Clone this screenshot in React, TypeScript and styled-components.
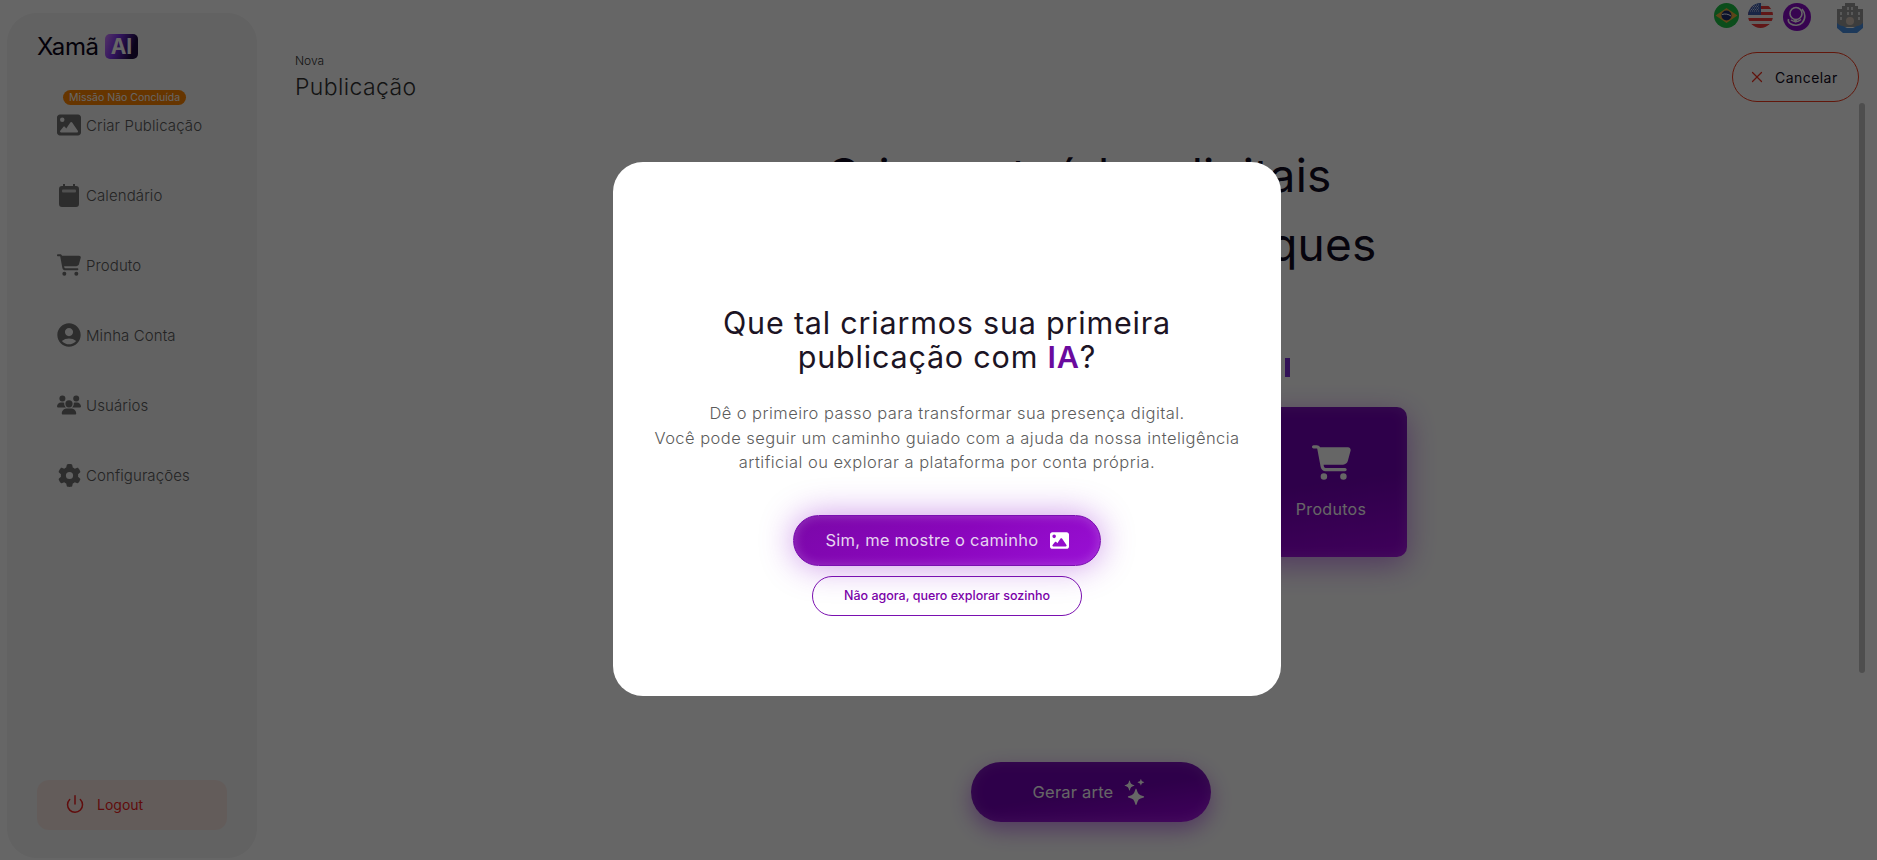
import React from 'react';
import styled, { createGlobalStyle } from 'styled-components';
import { FaCartShopping, FaGear, FaImage, FaUsers } from 'react-icons/fa6';
import { MdAccountCircle } from 'react-icons/md';
import { BsStars } from 'react-icons/bs';
import { Power, X } from 'lucide-react';

const FONT = `Inter, "Open Sans", "Liberation Sans", sans-serif`;

const GlobalStyle = createGlobalStyle`
  html, body {
    margin: 0;
    height: 860px;
    overflow: hidden;
    background: #fff;
    font-family: ${FONT};
  }
  * { box-sizing: border-box; }
`;

const CalendarIcon = () => (
  <svg width="24" height="24" viewBox="0 0 24 24">
    <path
      d="M6 1h2v2h8V1h2v2h1a3 3 0 0 1 3 3v15a3 3 0 0 1-3 3H5a3 3 0 0 1-3-3V6a3 3 0 0 1 3-3h1z"
      fill="currentColor"
    />
    <rect x="5" y="6.500" width="14" height="3" rx="1" fill="#c8c8c8" />
  </svg>
);

const NAV_ITEMS = [
  { label: 'Criar Publicação', icon: <FaImage size={24} />, mission: true },
  { label: 'Calendário', icon: <CalendarIcon /> },
  { label: 'Produto', icon: <FaCartShopping size={24} /> },
  { label: 'Minha Conta', icon: <MdAccountCircle size={28} /> },
  { label: 'Usuários', icon: <FaUsers size={24} /> },
  { label: 'Configurações', icon: <FaGear size={23} /> },
];

const BrazilFlag = () => (
  <svg width="25" height="25" viewBox="0 0 25 25">
    <circle cx="12.500" cy="12.500" r="12.500" fill="#1cc044" />
    <path d="M1.500 12.500 12.500 5l11 7.500-11 7.500z" fill="#e8ac3c" />
    <circle cx="12.500" cy="12.500" r="5" fill="#1c2f6b" />
    <path d="M8 11.500c3-1 6.500-.5 9 1.500" stroke="#fff" strokeWidth="1" fill="none" />
  </svg>
);

const UsaFlag = () => (
  <svg width="25" height="25" viewBox="0 0 25 25">
    <defs>
      <clipPath id="usa-clip">
        <circle cx="12.500" cy="12.500" r="12.500" />
      </clipPath>
    </defs>
    <g clipPath="url(#usa-clip)">
      <rect width="25" height="25" fill="#f4f4f4" />
      <rect y="3" width="25" height="3" fill="#f03a3a" />
      <rect y="9" width="25" height="3" fill="#f03a3a" />
      <rect y="15" width="25" height="3" fill="#f03a3a" />
      <rect y="21" width="25" height="4" fill="#f03a3a" />
      <rect width="13" height="12" fill="#3f5fae" />
      <path d="M2 2h9M2 5h9M2 8h9M3 3.500h8M3 6.500h8" stroke="#fff" strokeWidth=".7" strokeDasharray="1 1" />
    </g>
  </svg>
);

const HeadsetAvatar = () => (
  <svg width="28" height="28" viewBox="0 0 28 28">
    <circle cx="14" cy="14" r="14" fill="#8a0cc8" />
    <circle cx="13" cy="10.500" r="6" fill="none" stroke="#fff" strokeWidth="1.600" />
    <path d="M19 6c3.500 4 4 10 0 14-2.500 2.500-8 3-11 1-2.500-1.500-3-3.500-2.500-5" fill="none" stroke="#fff" strokeWidth="1.600" />
    <path d="M8 17c3 2 7 2 10-.5" fill="none" stroke="#fff" strokeWidth="1.500" />
    <circle cx="12.500" cy="17.800" r="1.600" fill="#fff" />
  </svg>
);

const CompanyIcon = () => (
  <svg width="26" height="30" viewBox="0 0 26 30">
    <path d="M0 6h5V3h3V0h10v3h3v3h5v18H0z" fill="#9a9a9a" />
    <path d="M3 9h2v3H3zM3 14h2v3H3zM21 9h2v3h-2zM21 14h2v3h-2zM10 4h2v3h-2zM14 4h2v3h-2zM10 9h2v3h-2zM14 9h2v3h-2z" fill="#dcdcdc" />
    <circle cx="13" cy="18" r="4" fill="#d8c6b8" />
    <path d="M0 20c2 2 4 3 6 3l4 2h6l4-2c2 0 4-1 6-3v5l-6 5H6l-6-5z" fill="#4a8fe0" />
  </svg>
);

const App: React.FC = () => {
  return (
    <Page>
      <GlobalStyle />
      <Sidebar>
        <Logo>
          Xamã<LogoBadge>AI</LogoBadge>
        </Logo>
        <Nav>
          {NAV_ITEMS.map((item) => (
            <NavItem key={item.label}>
              {item.mission && <MissionBadge>Missão Não Concluída</MissionBadge>}
              <NavIcon>{item.icon}</NavIcon>
              <NavLabel>{item.label}</NavLabel>
            </NavItem>
          ))}
        </Nav>
        <LogoutButton>
          <Power size={20} strokeWidth={1.8} />
          <span>Logout</span>
        </LogoutButton>
      </Sidebar>

      <Main>
        <TopBar>
          <BrazilFlag />
          <UsaFlag />
          <HeadsetAvatar />
          <CompanySlot>
            <CompanyIcon />
          </CompanySlot>
        </TopBar>
        <Header>
          <div>
            <Eyebrow>Nova</Eyebrow>
            <PageTitle>Publicação</PageTitle>
          </div>
          <CancelButton>
            <X size={18} strokeWidth={1.6} color="#f03020" />
            <span>Cancelar</span>
          </CancelButton>
        </Header>
        <Hero>
          Crie conteúdos digitais
          <br />
          com apenas alguns cliques
        </Hero>
        <TypingRow>
          <Caret />
        </TypingRow>
        <CardRow>
          <TypeCard>
            <FaCartShopping size={39} />
            <span>Produtos</span>
          </TypeCard>
        </CardRow>
        <GenerateButton>
          Gerar arte
          <BsStars size={26} />
        </GenerateButton>
        <ScrollThumb />
      </Main>

      <Overlay>
        <Modal>
          <ModalTitle>
            Que tal criarmos sua primeira
            <br />
            publicação com <strong>IA</strong>?
          </ModalTitle>
          <ModalText>
            Dê o primeiro passo para transformar sua presença digital.
            <br />
            Você pode seguir um caminho guiado com a ajuda da nossa inteligência
            <br />
            artificial ou explorar a plataforma por conta própria.
          </ModalText>
          <PrimaryButton>
            Sim, me mostre o caminho
            <FaImage size={19} />
          </PrimaryButton>
          <SecondaryButton>Não agora, quero explorar sozinho</SecondaryButton>
        </Modal>
      </Overlay>
    </Page>
  );
};

const Page = styled.div`
  display: flex;
  width: 1877px;
  height: 860px;
  overflow: hidden;
`;

const Sidebar = styled.aside`
  flex: 0 0 250px;
  display: flex;
  flex-direction: column;
  margin: 13px 0 2px 7px;
  padding: 20px 30px 28px;
  border-radius: 30px;
  background: #f4f4f4;
`;

const Logo = styled.div`
  display: flex;
  align-items: center;
  gap: 6px;
  height: 26px;
  font-size: 24px;
  font-weight: 400;
  letter-spacing: -0.3px;
  color: #0a0418;
`;

const LogoBadge = styled.span`
  display: flex;
  align-items: center;
  justify-content: center;
  width: 33px;
  height: 25px;
  border-radius: 5px;
  background: linear-gradient(110deg, #d080ff 0%, #8034f0 35%, #1c0840 80%);
  color: #fff;
  font-size: 21px;
  font-weight: 700;
`;

const Nav = styled.nav`
  flex: 1;
  display: flex;
  flex-direction: column;
  margin-top: 31px;
  padding-left: 20px;
`;

const NavItem = styled.div`
  position: relative;
  display: flex;
  align-items: center;
  gap: 5px;
  flex: 0 0 70px;
  color: #707070;
`;

const MissionBadge = styled.span`
  position: absolute;
  left: 6px;
  top: 0;
  height: 15px;
  padding: 0 6px;
  border-radius: 8px;
  background: #ff8400;
  color: #fff;
  font-size: 10.500px;
  line-height: 15px;
  white-space: nowrap;
`;

const NavIcon = styled.span`
  flex: 0 0 24px;
  min-width: 0;
  display: flex;
  align-items: center;
  justify-content: center;
  svg {
    flex-shrink: 0;
  }
`;

const NavLabel = styled.span`
  font-size: 15px;
  font-weight: 300;
  letter-spacing: 0.1px;
  color: #5a5a5a;
`;

const LogoutButton = styled.div`
  display: flex;
  align-items: center;
  gap: 12px;
  height: 50px;
  padding-left: 28px;
  padding-bottom: 2px;
  border-radius: 12px;
  background: #f8e6e2;
  color: #f02020;
  font-size: 14px;
  font-weight: 400;
`;

const Main = styled.main`
  position: relative;
  flex: 1;
  display: flex;
  flex-direction: column;
  padding: 3px 14px 0 38px;
`;

const TopBar = styled.div`
  display: flex;
  justify-content: flex-end;
  align-items: flex-start;
  gap: 9.500px;
  height: 30px;
`;

const CompanySlot = styled.div`
  margin-left: 17px;
`;

const Header = styled.header`
  display: flex;
  justify-content: space-between;
  align-items: flex-start;
  margin-top: 19px;
  padding-right: 4px;
`;

const Eyebrow = styled.div`
  margin-top: 1px;
  font-size: 12px;
  font-weight: 300;
  line-height: 16px;
  color: #333;
`;

const PageTitle = styled.div`
  margin-top: 4px;
  font-size: 23px;
  font-weight: 300;
  line-height: 28px;
  letter-spacing: 0.4px;
  color: #333;
`;

const CancelButton = styled.button`
  display: flex;
  align-items: center;
  gap: 9px;
  width: 127px;
  height: 50px;
  padding: 0 0 0 15px;
  border: 1px solid #f53a1c;
  border-radius: 25px;
  background: transparent;
  color: #110a22;
  font-family: ${FONT};
  font-size: 14px;
  font-weight: 400;
  letter-spacing: 0.45px;
`;

const Hero = styled.h1`
  margin: 39px 0 0;
  text-align: center;
  font-size: 46px;
  font-weight: 400;
  line-height: 69px;
  letter-spacing: 0.2px;
  color: #110a22;
`;

const TypingRow = styled.div`
  display: flex;
  justify-content: flex-end;
  width: 422px;
  margin: 79px auto 0;
`;

const Caret = styled.span`
  width: 5px;
  height: 19px;
  background: #7a2bd8;
`;

const CardRow = styled.div`
  display: flex;
  justify-content: flex-end;
  width: 632px;
  margin: 30px auto 0;
  transform: translateX(12px);
`;

const TypeCard = styled.div`
  display: flex;
  flex-direction: column;
  align-items: center;
  gap: 17px;
  width: 152px;
  height: 150px;
  padding-top: 36px;
  border-radius: 10px;
  background: linear-gradient(172deg, #7400b8 0%, #7400b8 50%, #a000e4 100%);
  box-shadow: 0 8px 30px rgba(140, 0, 220, 0.45),
    inset 0 0 14px rgba(255, 255, 255, 0.16);
  color: #fff;
  font-size: 16px;
  font-weight: 400;
  letter-spacing: 0.3px;
`;

const GenerateButton = styled.button`
  display: flex;
  align-items: center;
  justify-content: center;
  gap: 10px;
  width: 240px;
  height: 60px;
  margin: 205px auto 0;
  transform: translateX(12px);
  border: 0;
  border-radius: 30px;
  background: linear-gradient(172deg, #7400b8 0%, #7400b8 50%, #a000e4 100%);
  box-shadow: 0 8px 22px rgba(140, 0, 220, 0.45),
    inset 0 0 14px rgba(255, 255, 255, 0.16);
  color: #fff;
  font-family: ${FONT};
  font-size: 16.500px;
  font-weight: 400;
  letter-spacing: 0.2px;
`;

const ScrollThumb = styled.div`
  position: absolute;
  top: 103px;
  right: 12px;
  width: 6px;
  height: 570px;
  border-radius: 3px;
  background: #c3c3c3;
`;

const Overlay = styled.div`
  position: fixed;
  inset: 0;
  display: flex;
  align-items: flex-start;
  justify-content: center;
  padding: 162px 0 0 17px;
  background: rgba(0, 0, 0, 0.6);
`;

const Modal = styled.div`
  display: flex;
  flex-direction: column;
  align-items: center;
  width: 668px;
  height: 534px;
  padding-top: 144px;
  border-radius: 30px;
  background: #fff;
`;

const ModalTitle = styled.h2`
  margin: 0;
  text-align: center;
  font-size: 30.500px;
  font-weight: 400;
  line-height: 34px;
  letter-spacing: 0.8px;
  color: #1c1424;

  strong {
    font-weight: 600;
    color: #6a0a9e;
  }
`;

const ModalText = styled.p`
  margin: 27px 0 0;
  text-align: center;
  font-size: 16.500px;
  font-weight: 300;
  line-height: 24.500px;
  letter-spacing: 0.45px;
  color: #5c5c5c;
`;

const PrimaryButton = styled.button`
  display: flex;
  align-items: center;
  justify-content: center;
  gap: 11px;
  width: 308px;
  height: 51px;
  margin-top: 40px;
  border: 1px solid #7a10b0;
  border-radius: 26px;
  background: linear-gradient(150deg, #7a08a8 0%, #8a06bc 50%, #9a10d6 100%);
  box-shadow: 0 0 34px rgba(130, 0, 200, 0.42),
    inset 0 0 12px rgba(255, 255, 255, 0.2);
  color: #e6d4f0;
  font-family: ${FONT};
  font-size: 16.500px;
  font-weight: 400;
  letter-spacing: 0.25px;
  svg {
    color: #fff;
  }
`;

const SecondaryButton = styled.button`
  width: 270px;
  height: 40px;
  margin-top: 10px;
  border: 1px solid #7a10b0;
  border-radius: 20px;
  background: transparent;
  color: #7a00a8;
  font-family: ${FONT};
  font-size: 12.500px;
  font-weight: 500;
`;

export default App;
